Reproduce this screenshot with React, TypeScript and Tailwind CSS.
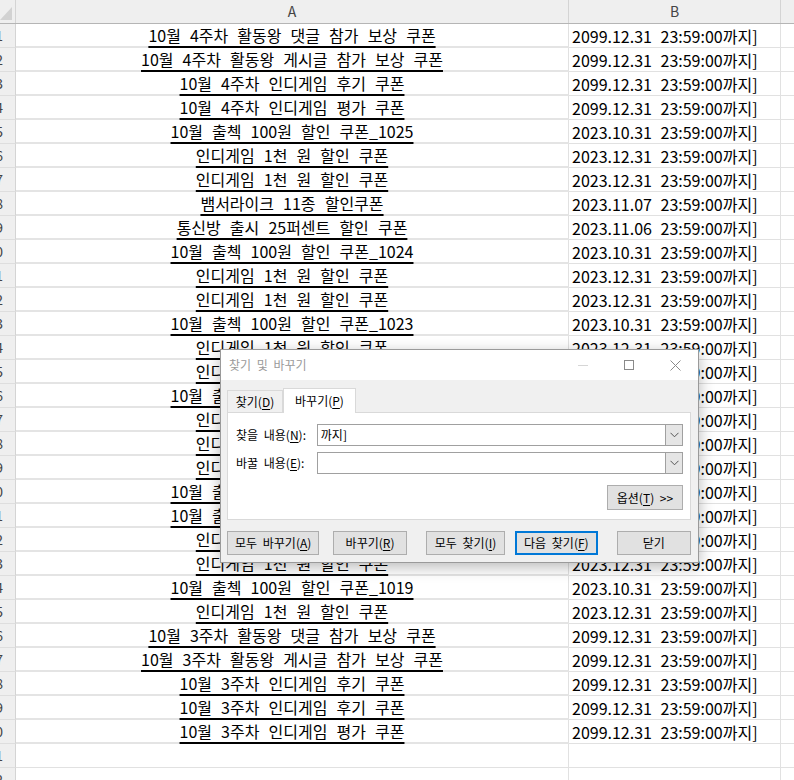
import React from "react";

const rows: [string, string][] = [
  ["10월 4주차 활동왕 댓글 참가 보상 쿠폰", "2099.12.31"],
  ["10월 4주차 활동왕 게시글 참가 보상 쿠폰", "2099.12.31"],
  ["10월 4주차 인디게임 후기 쿠폰", "2099.12.31"],
  ["10월 4주차 인디게임 평가 쿠폰", "2099.12.31"],
  ["10월 출첵 100원 할인 쿠폰_1025", "2023.10.31"],
  ["인디게임 1천 원 할인 쿠폰", "2023.12.31"],
  ["인디게임 1천 원 할인 쿠폰", "2023.12.31"],
  ["뱀서라이크 11종 할인쿠폰", "2023.11.07"],
  ["통신방 출시 25퍼센트 할인 쿠폰", "2023.11.06"],
  ["10월 출첵 100원 할인 쿠폰_1024", "2023.10.31"],
  ["인디게임 1천 원 할인 쿠폰", "2023.12.31"],
  ["인디게임 1천 원 할인 쿠폰", "2023.12.31"],
  ["10월 출첵 100원 할인 쿠폰_1023", "2023.10.31"],
  ["인디게임 1천 원 할인 쿠폰", "2023.12.31"],
  ["인디게임 1천 원 할인 쿠폰", "2023.12.31"],
  ["10월 출첵 100원 할인 쿠폰_1022", "2023.10.31"],
  ["인디게임 1천 원 할인 쿠폰", "2023.12.31"],
  ["인디게임 1천 원 할인 쿠폰", "2023.12.31"],
  ["인디게임 1천 원 할인 쿠폰", "2023.12.31"],
  ["10월 출첵 100원 할인 쿠폰_1021", "2023.10.31"],
  ["10월 출첵 100원 할인 쿠폰_1020", "2023.10.31"],
  ["인디게임 1천 원 할인 쿠폰", "2023.12.31"],
  ["인디게임 1천 원 할인 쿠폰", "2023.12.31"],
  ["10월 출첵 100원 할인 쿠폰_1019", "2023.10.31"],
  ["인디게임 1천 원 할인 쿠폰", "2023.12.31"],
  ["10월 3주차 활동왕 댓글 참가 보상 쿠폰", "2099.12.31"],
  ["10월 3주차 활동왕 게시글 참가 보상 쿠폰", "2099.12.31"],
  ["10월 3주차 인디게임 후기 쿠폰", "2099.12.31"],
  ["10월 3주차 인디게임 후기 쿠폰", "2099.12.31"],
  ["10월 3주차 인디게임 평가 쿠폰", "2099.12.31"],
];

const Key = ({ k }: { k: string }) => <span className="underline underline-offset-2">{k}</span>;

const Btn = ({ children, className = "", primary = false }: { children: React.ReactNode; className?: string; primary?: boolean }) => (
  <div
    className={`h-[24px] flex items-center justify-center bg-[#e1e1e1] text-[12px] text-black ${
      primary ? "border-2 border-[#0078d7]" : "border border-[#adadad]"
    } ${className}`}
  >
    {children}
  </div>
);

const Combo = ({ value }: { value: string }) => (
  <div className="flex h-[22px] w-[367px] border border-[#a0a0a0] bg-white">
    <div className="flex-1 flex items-center px-[3px] text-[12px] text-black">{value}</div>
    <div className="w-[17px] border-l border-[#a0a0a0] bg-[#e5e5e5] flex items-center justify-center">
      <svg width="9" height="6" viewBox="0 0 9 6">
        <path d="M0.5 0.8 L4.5 4.8 L8.5 0.8" fill="none" stroke="#555" strokeWidth="1" />
      </svg>
    </div>
  </div>
);

function Dialog() {
  return (
    <div className="absolute left-[220px] top-[349px] w-[479px] h-[214px] bg-[#f0f0f0] border border-[#9a9a9a] shadow-[0_4px_14px_rgba(0,0,0,0.28)] flex flex-col [word-spacing:3px]">
      <div className="h-[30px] bg-white flex items-center shrink-0">
        <span className="ml-[8px] text-[12px] text-[#9a9a9a]">찾기 및 바꾸기</span>
        <div className="ml-auto flex h-full">
          <div className="w-[46px] flex items-center justify-center">
            <div className="w-[10px] h-px bg-[#d6d6d6]" />
          </div>
          <div className="w-[46px] flex items-center justify-center">
            <div className="w-[10px] h-[10px] border border-[#8a8a8a]" />
          </div>
          <div className="w-[46px] flex items-center justify-center">
            <svg width="11" height="11" viewBox="0 0 11 11">
              <path d="M0.5 0.5 L10.5 10.5 M10.5 0.5 L0.5 10.5" stroke="#8a8a8a" strokeWidth="1" />
            </svg>
          </div>
        </div>
      </div>
      <div className="pl-[6px] pr-[7px] pt-[7px] flex flex-col">
        <div className="flex items-end h-[25px]">
          <div className="h-[22px] w-[56px] border border-b-0 border-[#d9d9d9] flex items-center justify-center text-[12px] text-black">
            찾기(<Key k="D" />)
          </div>
          <div className="h-[25px] w-[73px] -mb-px relative z-10 bg-white border border-b-0 border-[#d9d9d9] flex items-center justify-center text-[12px] text-black">
            바꾸기(<Key k="P" />)
          </div>
        </div>
        <div className="h-[108px] bg-white border border-[#d9d9d9] pl-[8px] pr-[7px] pt-[11px] flex flex-col">
          <div className="flex items-center">
            <span className="w-[81px] text-[12px] text-black">찾을 내용(<Key k="N" />):</span>
            <Combo value="까지]" />
          </div>
          <div className="flex items-center mt-[6px]">
            <span className="w-[81px] text-[12px] text-black">바꿀 내용(<Key k="E" />):</span>
            <Combo value="" />
          </div>
          <div className="flex justify-end mt-[11px]">
            <Btn className="w-[76px] h-[25px]">
              옵션(<Key k="T" />) &gt;&gt;
            </Btn>
          </div>
        </div>
        <div className="flex mt-[11px]">
          <Btn className="w-[93px]">
            모두 바꾸기(<Key k="A" />)
          </Btn>
          <Btn className="w-[74px] ml-[14px]">
            바꾸기(<Key k="R" />)
          </Btn>
          <Btn className="w-[80px] ml-[19px]">
            모두 찾기(<Key k="I" />)
          </Btn>
          <Btn primary className="w-[83px] ml-[10px]">
            다음 찾기(<Key k="F" />)
          </Btn>
          <Btn className="w-[75px] ml-[19px]">닫기</Btn>
        </div>
      </div>
    </div>
  );
}

export default function App() {
  const total = 32;
  return (
    <div
      className="relative w-[794px] h-[780px] overflow-hidden bg-white"
      style={{ fontFamily: '"Noto Sans CJK KR", "Noto Sans", sans-serif' }}
    >
      <div className="flex h-[24px] bg-[#efefef] border-b border-[#b5b5b5]">
        <div className="w-[16px] border-r border-[#d4d4d4] relative">
          <svg className="absolute left-0 top-[7px]" width="12" height="13" viewBox="0 0 12 13">
            <path d="M12 0 L12 13 L0 13 Z" fill="#d2d2d2" />
          </svg>
        </div>
        <div className="w-[553px] border-r border-[#d4d4d4] flex items-center justify-center text-[14px] text-[#444]">A</div>
        <div className="w-[212px] border-r border-[#d4d4d4] flex items-center justify-center text-[14px] text-[#444]">B</div>
        <div className="flex-1" />
      </div>
      {Array.from({ length: total }).map((_, i) => {
        const r = rows[i];
        return (
          <div key={i} className="flex h-[24px]">
            <div className="w-[16px] shrink-0 overflow-hidden flex justify-end items-center pr-[12px] bg-[#efefef] border-r border-[#d4d4d4] border-b border-b-[#dedede] text-[14px] text-[#444]">
              <span className="shrink-0">{i + 1}</span>
            </div>
            <div className={`w-[553px] shrink-0 flex items-center justify-center border-r border-[#e1e1e1] border-b ${r ? "border-b-[#e4e4e4] border-b-2" : "border-b-[#e1e1e1]"} text-[16px] text-black [word-spacing:5.5px]`}>
              {r && (
                <span className="underline decoration-[1.5px] underline-offset-[4px] leading-none whitespace-nowrap">{r[0]}</span>
              )}
            </div>
            <div className="w-[212px] shrink-0 flex items-center pl-[3px] border-r border-[#e1e1e1] border-b border-b-[#e1e1e1] text-[16px] text-black [word-spacing:5px]">
              {r && <span className="leading-none whitespace-nowrap">{r[1]} 23:59:00까지]</span>}
            </div>
            <div className="flex-1 border-b border-[#e1e1e1]" />
          </div>
        );
      })}
      <Dialog />
    </div>
  );
}
